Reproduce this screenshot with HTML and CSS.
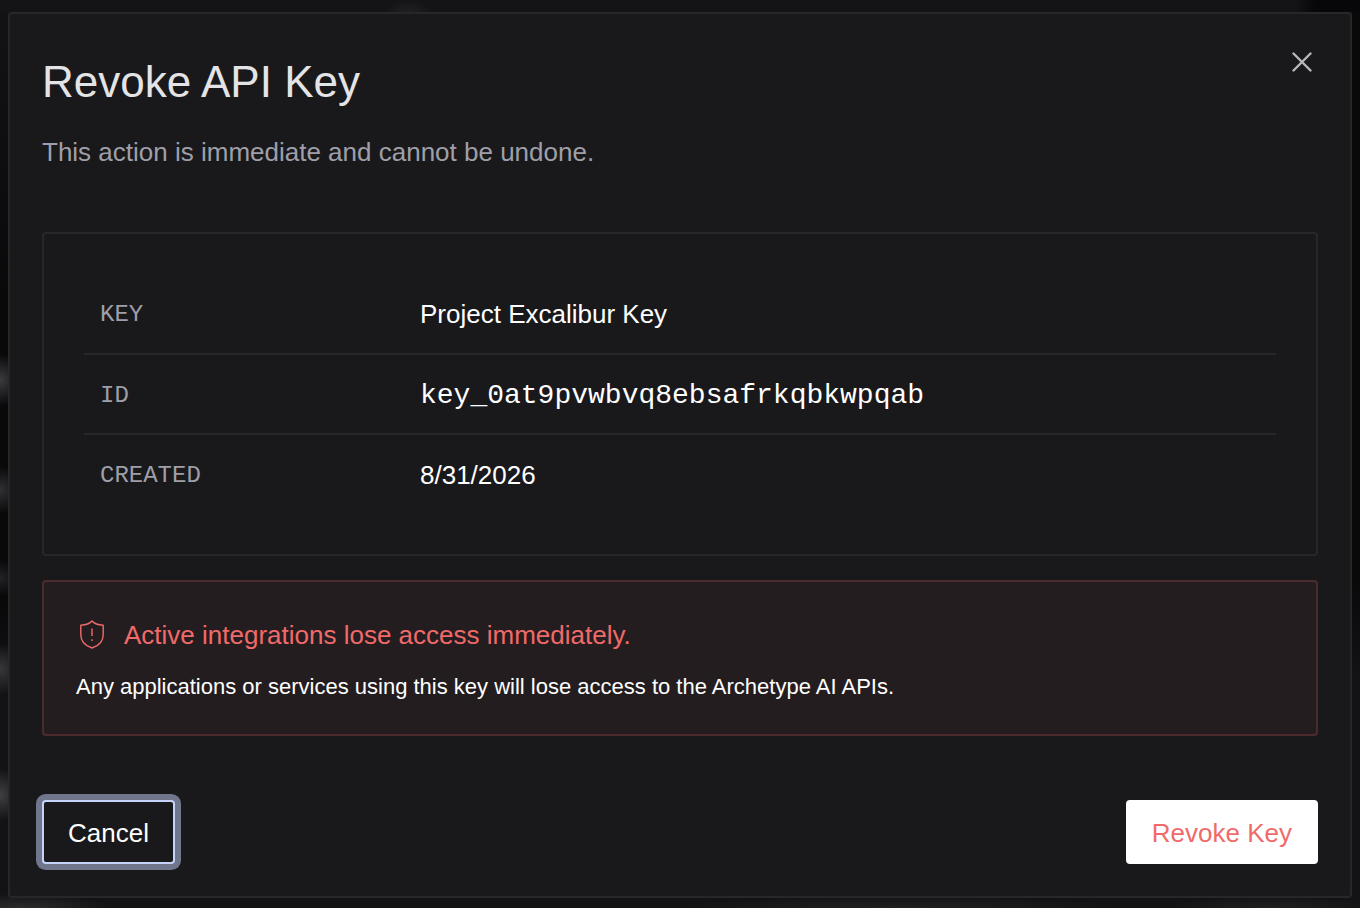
FILE: index.html
```html
<!DOCTYPE html>
<html lang="en">
<head>
<meta charset="utf-8">
<meta name="viewport" content="width=device-width, initial-scale=1">
<title>Revoke API Key</title>
<link rel="stylesheet" href="styles.css">
</head>
<body class="backdrop">
<main class="dialog" role="dialog" aria-labelledby="dialog-title" aria-describedby="dialog-desc">
  <header class="dialog-header">
    <div class="heading">
      <h1 class="title" id="dialog-title">Revoke API Key</h1>
      <p class="subtitle" id="dialog-desc">This action is immediate and cannot be undone.</p>
    </div>
    <button class="close" type="button" aria-label="Close">
      <svg width="20" height="20" viewBox="0 0 20 20" fill="none" stroke="currentColor" stroke-width="2.4" stroke-linecap="round"><path d="M1.5 1.5 18.5 18.5M18.5 1.5 1.5 18.5"/></svg>
    </button>
  </header>
  <section class="details">
    <table class="details-table">
      <tbody>
        <tr><th scope="row">KEY</th><td>Project Excalibur Key</td></tr>
        <tr><th scope="row">ID</th><td class="mono">key_0at9pvwbvq8ebsafrkqbkwpqab</td></tr>
        <tr><th scope="row">CREATED</th><td>8/31/2026</td></tr>
      </tbody>
    </table>
  </section>
  <section class="warning">
    <h2 class="warning-title">
      <svg class="shield" width="32" height="32" viewBox="0 0 32 32" fill="none" stroke="currentColor" stroke-width="1.4" stroke-linejoin="round"><path d="M16 2C14 4.500 10 6 4.800 6.200V15.500C4.800 22.500 9.500 27 16 29C22.500 27 27.200 22.500 27.200 15.500V6.200C22 6 18 4.500 16 2Z"/><path d="M16 9.500V17M16 20.200V22"/></svg>
      <span>Active integrations lose access immediately.</span>
    </h2>
    <p class="warning-text">Any applications or services using this key will lose access to the Archetype AI APIs.</p>
  </section>
  <footer class="actions">
    <button class="button cancel" type="button">Cancel</button>
    <button class="button revoke" type="button">Revoke Key</button>
  </footer>
</main>
</body>
</html>
```
FILE: styles.css
```css
* { box-sizing: border-box; }

.backdrop {
  margin: 0;
  min-height: 100vh;
  padding: 12px 8px 10px;
  display: flex;
  font-family: "Liberation Sans", Arial, sans-serif;
  color: #fff;
  background:
    radial-gradient(ellipse 24px 26px at 0 380px, #3c3c3e, transparent),
    radial-gradient(ellipse 24px 24px at 0 490px, #303032, transparent),
    radial-gradient(ellipse 22px 18px at 0 578px, #222224, transparent),
    radial-gradient(ellipse 24px 26px at 0 669px, #38383a, transparent),
    radial-gradient(ellipse 24px 26px at 0 795px, #404042, transparent),
    radial-gradient(ellipse 90px 14px at 20px 100%, #2c2c2e, transparent),
    radial-gradient(ellipse 24px 12px at 408px 12px, #202022, transparent),
    radial-gradient(ellipse 220px 12px at 900px 100%, #202022, transparent),
    radial-gradient(ellipse 100px 12px at 1270px 100%, #202022, transparent),
    linear-gradient(90deg, #141416 0, #141416 1295px, #070709 1315px) top / 100% 12px no-repeat,
    linear-gradient(#09090a 580px, #131315 680px) right / 8px 100% no-repeat,
    linear-gradient(#131315 0, #09090a 300px, #09090a 600px, #131315 700px);
}

.dialog {
  flex: 1;
  display: flex;
  flex-direction: column;
  padding: 32px;
  background: #19191b;
  border: 2px solid #27272a;
  border-radius: 4px;
}

.dialog-header { display: flex; justify-content: space-between; align-items: flex-start; }
.title { margin: 8px 0 0; font-size: 44px; line-height: 56px; font-weight: 400; color: #e4e4e7; }
.subtitle { margin: 24px 0 0; font-size: 26px; line-height: 36px; color: #9f9fa9; }

.close {
  display: flex;
  margin: 0;
  padding: 6px;
  border: 0;
  background: none;
  color: #b9b9bb;
}

.details { margin-top: 62px; padding: 40px; border: 2px solid #27272a; border-radius: 4px; }
.details-table { width: 100%; border-collapse: collapse; table-layout: fixed; }
.details-table th,
.details-table td { height: 80px; padding: 2px 16px 0; text-align: left; font-weight: 400; }
.details-table th {
  width: 320px;
  font-family: "Liberation Mono", monospace;
  font-size: 24px;
  color: #9f9fa9;
}
.details-table td { font-size: 26px; }
.details-table .mono { font-family: "Liberation Mono", monospace; font-size: 28px; }
.details-table tr + tr { border-top: 2px solid #27272a; }

.warning {
  margin-top: 24px;
  padding: 33px 32px 31px;
  border: 2px solid #4b2b2e;
  border-radius: 4px;
  background: #241d1f;
}
.warning-title {
  display: flex;
  align-items: center;
  gap: 16px;
  margin: 0;
  font-size: 26px;
  line-height: 40px;
  font-weight: 400;
  color: #f06a6a;
}
.warning-text { margin: 16px 0 0; font-size: 22px; line-height: 32px; }

.actions { display: flex; justify-content: space-between; margin-top: auto; }
.button {
  height: 64px;
  padding: 2px 24px 0;
  border: 2px solid;
  border-radius: 4px;
  font: 400 26px "Liberation Sans", Arial, sans-serif;
}
.cancel { border-color: #c6d4fb; background: #19191b; color: #fff; box-shadow: 0 0 0 6px #70778c; }
.revoke { border-color: #fff; background: #fff; color: #f06a6a; }
```
